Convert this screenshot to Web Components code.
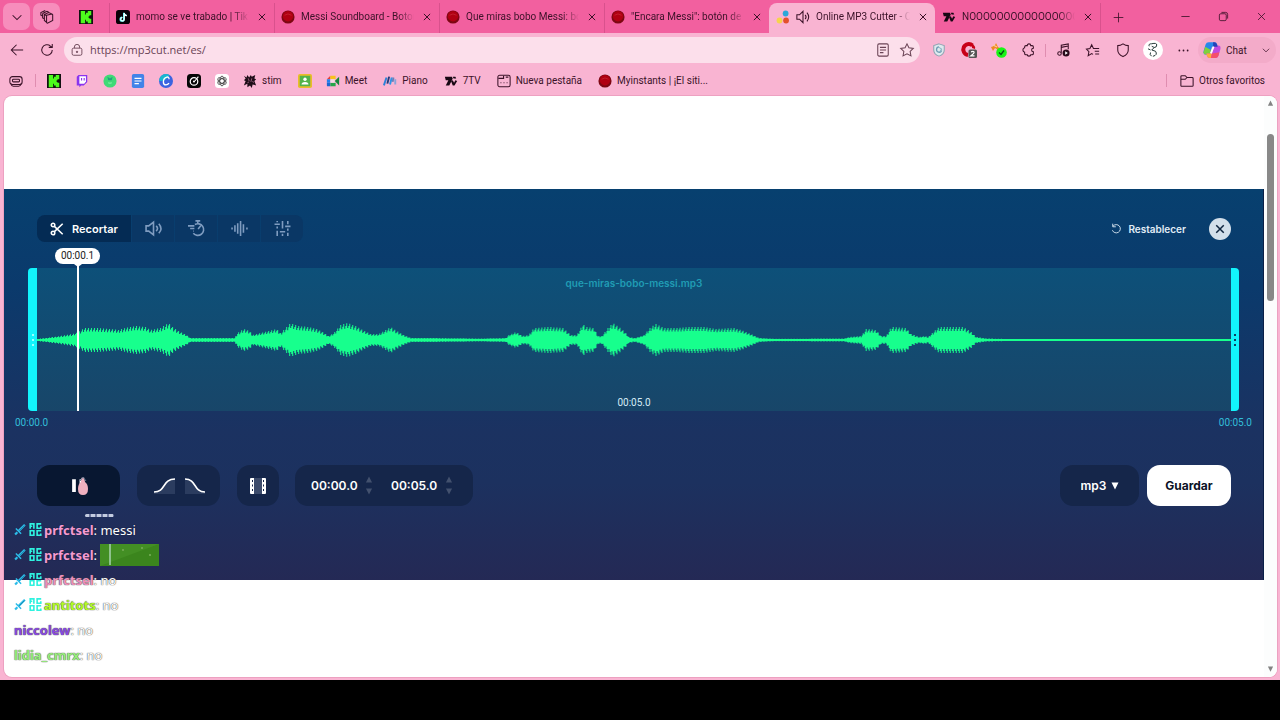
<!DOCTYPE html>
<html lang="es">
<head>
<meta charset="utf-8">
<title>Online MP3 Cutter</title>
<style>
  html { height: 100%; }
  body { margin: 0; min-height: 100%; display: flex; flex-direction: column; background: #000; font-family: Roboto, "Open Sans", sans-serif; font-size: 10px; color: #3b1228; }
</style>
</head>
<body>
<browser-window></browser-window>
<script>
const ICONS = {
  chevron: '<path d="M3 6l5 5 5-5"/>',
  workspaces: '<path d="M7.500 6l6-1.500q1 0 1 1V12l-6 3q-1 0-1-1zM7.500 6.500L5 5v7l2.500 2M5 5l5-2 3.500 1.500M5 10l-2-1V4.500Q3 4 4 3.500l4-2 2 1M3 7L1 6V3l5-2.500"/>',
  kick: '<path fill="#111" stroke="none" d="M0 0h16v16H0z"/><path fill="#4dfb1c" stroke="none" d="M2 1h5v4h1V3h2V1h4v5h-2v1h-1v2h1v1h2v5h-4v-2H8v-2H7v4H2z"/>',
  tiktok: '<rect width="16" height="16" rx="3" fill="#080008" stroke="none"/><path d="M9 3v7.500a2 2 0 1 1-2-2M9 3c0 2 1 3 3 3" stroke="#6ff" stroke-width="2"/><path d="M9.500 3.500v7a2 2 0 1 1-2-2M9.500 3.500c0 2 1 3 3 3" stroke="#fff"/>',
  redball: '<circle cx="8" cy="8" r="7.500" fill="#7d0713" stroke="none"/><circle cx="8" cy="7" r="6" fill="#b00012" stroke="none"/><path d="M4 6q4-3 8 0" stroke="#c72a35" stroke-width=".8"/>',
  close: '<path d="M3 3l10 10M13 3L3 13"/>',
  dots3: '<g stroke="none"><circle cx="11" cy="4" r="3.300" fill="#2ba8d9"/><circle cx="4" cy="12" r="3.300" fill="#f6d44c"/><circle cx="11.500" cy="12" r="3.300" fill="#e4502c"/></g>',
  speaker: '<path d="M1 5.500h3l4-4v13l-4-4H1zM10.500 5.500q2 2.500 0 5M12.500 3q4 5 0 10"/>',
  seventv: '<g fill="#180713" stroke="none"><path d="M1 3h8l1 2-4 8H2l3-6H2z"/><path d="M8 8l2-1 1.500 3L13 7l2 1-3 5h-2zM10 3h3l1 2h-3z"/></g>',
  plus: '<path d="M8 1v14M1 8h14"/>',
  minus: '<path d="M2 8h12"/>',
  restore: '<rect x="2" y="4" width="10" height="10" rx="2"/><path d="M5 2h6q3 0 3 3v6"/>',
  back: '<path d="M15 8H1.500M7.500 2l-6 6 6 6"/>',
  reload: '<path d="M14 8a6 6 0 1 1-2-4.500L14 5M14 1v4h-4"/>',
  lock: '<rect x="1.500" y="5.500" width="13" height="9.500" rx="2"/><path d="M4.500 5.500V4a3.500 3.500 0 0 1 7 0v1.500"/><circle cx="8" cy="10.500" r=".9" fill="currentColor"/>',
  reader: '<rect x="2" y="1" width="12" height="14" rx="1.500"/><path d="M4.500 5h7M4.500 8h7M4.500 11h4"/>',
  star: '<path d="M8 1l2.200 4.500 5 .7-3.600 3.500.9 5L8 12.400 3.500 14.700l.9-5L.8 6.200l5-.7z"/>',
  shieldgray: '<path d="M8 1l6 2v5q0 5-6 7-6-2-6-7V3z" fill="#dfe9ee" stroke="#8fa5b3"/><path d="M8 4.500a3 3 0 1 0 3 4" stroke="#6f9cb5" stroke-width="1.500"/><path d="M8 5l3 2-2 3" stroke="#8fb4c6"/>',
  adblock: '<path d="M11.500 3.500A5.500 5.500 0 1 0 7 13" stroke="#c80018" stroke-width="4"/><path d="M11 2q4 2 3 5l-3-1z" fill="#c80018" stroke="none"/><rect x="7.500" y="7.500" width="8.500" height="8.500" rx="1.500" fill="#555" stroke="none"/><path d="M10 9.800q3.500-1 3 .8 0 1-3 3.200h3.500" stroke="#fff"/>',
  carrot: '<path d="M0 5q4-1 5-4l2 4 3 2-3 1-3-2-2 3z" fill="#ef8b22" stroke="none"/><path d="M2 3l4 2" stroke="#f7cf9e"/><circle cx="10.500" cy="10.500" r="5.300" fill="#19f516" stroke="none"/><path d="M8 10.500l2 2 3-4" stroke="#064d13" stroke-width="1.300"/>',
  puzzle: '<path d="M4.500 3H6q0-2 2-2t2 2h1.500Q13 3 13 4.500V6q-2 0-2 2t2 2v2q0 1.500-1.500 1.500H10q0 1.500-2 1.500t-2-1.500H4.500Q3 13.500 3 12v-1.500Q1 10 1 8t2-2.500v-1Q3 3 4.500 3z"/>',
  music: '<path d="M6 11V2.500L14 1v6M6 5l8-1.500"/><circle cx="4" cy="12" r="2"/><circle cx="11.500" cy="11.500" r="4" fill="#2a0c1c" stroke="none"/><path d="M10.500 9.500l3 2-3 2z" fill="#fff" stroke="none"/>',
  favs: '<path d="M8 13l-1.500-1L2.500 14.500l.8-4.500L.5 7l4-.7L6.500 2l2 4.300H15M10 9.500h5M10.500 12.500H15"/>',
  shield: '<path d="M8 1q3 2 6 2v5q0 5-6 7.500Q2 13 2 8V3q3 0 6-2z"/>',
  profile: '<circle cx="8" cy="8" r="8" fill="#fff" stroke="none"/><path d="M5 5q-1-2 2-2 4-1 4 1 0 2-2 2L7 8l3 1q2 3-2 4M7 5l2 1M6 10q-1 2 1 3M4 7l2 1" stroke="#263b3a" stroke-width=".8"/>',
  more: '<g fill="currentColor" stroke="none"><circle cx="2" cy="8" r="1.300"/><circle cx="8" cy="8" r="1.300"/><circle cx="14" cy="8" r="1.300"/></g>',
  copilot: '<g stroke="none"><path d="M5 1h5q2 0 2.500 2l.5 2H8L6 12H2.500Q0 12 .5 9l1.800-6Q3 1 5 1z" fill="#2587ea"/><path d="M2 5l-1.500 5q0 2 2 2H6l1-4z" fill="#7ed13d"/><path d="M11 15H6q-2 0-2.500-2L3 11h5l2-7h3.500Q16 4 15.500 7l-1.800 6q-.7 2-2.700 2z" fill="#c04be0"/><path d="M3 11h5l-1 4H6q-2 0-2.500-2z" fill="#ffae35"/><path d="M8 11l-1 4h4q2 0 2.700-2l.8-3z" fill="#f5506a"/><path d="M9 1h1q2 0 2.500 2l.5 2H9z" fill="#2443b8"/><path d="M9.500 5L7 11" stroke="#fff" stroke-width="1.500"/></g>',
  drawer: '<rect x="1" y="3" width="14" height="9" rx="3"/><rect x="4" y="6" width="8" height="3" rx="1"/><path d="M2 11q1 3 3 3h6q2 0 3-3"/>',
  twitch: '<path d="M2 3l2-2h10v8l-4 4H7l-2 2v-2H2z" fill="#8a35ee" stroke="none"/><path d="M5 2.500h7.500v6L10.500 11H5z" fill="#fff" stroke="none"/><path d="M7.500 4.500v3M10.500 4.500v3" stroke="#8a35ee" stroke-width="1.300"/>',
  greenball: '<circle cx="8" cy="8" r="7.500" fill="#3fda76" stroke="none"/><path d="M5 3l3 2 3-2-1 4H6z" fill="#249d80" stroke="none"/><path d="M6 10q2 1 4 0" stroke="#8df0ae"/>',
  docs: '<rect x="1" y="0" width="14" height="16" rx="2" fill="#4283e8" stroke="none"/><path d="M4 5h8M4 8h8M4 11h5" stroke="#fff" stroke-width="1.300"/>',
  canva: '<circle cx="8" cy="8" r="8" fill="#3b63e0" stroke="none"/><path d="M8 0a8 8 0 0 0-8 8q8 1 12-6.500Q10 0 8 0z" fill="#19b8cf" stroke="none"/><path d="M11.500 6q0-3-2.500-2.500Q5 4.500 5 9q0 3.500 3 3.500 2 0 3.500-2" stroke="#fff" stroke-width="1.500"/>',
  blackdisc: '<rect width="16" height="16" rx="4" fill="#060606" stroke="none"/><circle cx="8" cy="8.500" r="4.300" stroke="#fff" stroke-width="1.400"/><path d="M9 8l4-5" stroke="#fff"/><circle cx="8" cy="8.500" r="1.200" fill="#fff" stroke="none"/>',
  gpt: '<rect width="16" height="16" rx="4" fill="#fff" stroke="none"/><g stroke="#333" stroke-width=".9"><ellipse cx="8" cy="8" rx="2.500" ry="5.500"/><ellipse cx="8" cy="8" rx="2.500" ry="5.500" transform="rotate(60 8 8)"/><ellipse cx="8" cy="8" rx="2.500" ry="5.500" transform="rotate(120 8 8)"/></g>',
  stim: '<path d="M1 2l3 2 1-3 2 3 2-3 1 2 4-2-1 4 2 1-2 2 2 5-4-1-1 4-2-3-3 2v-4l-4 2 2-5-2-1 2-2z" fill="#1e0d18" stroke="none"/><path d="M6 5l1 3M10 5l-1 4M5 10l2-1M11 8l1 2" stroke="#d78cae" stroke-width=".7"/>',
  classroom: '<rect width="16" height="16" rx="2" fill="#e9bd2a" stroke="none"/><rect x="2" y="2" width="12" height="12" fill="#54b34b" stroke="none"/><circle cx="8" cy="6" r="1.900" fill="#fff" stroke="none"/><path d="M4 12q0-3 4-3t4 3z" fill="#fff" stroke="none"/>',
  meet: '<g stroke="none"><path d="M1 6l4-4v4z" fill="#e94235"/><path d="M1 6h4v4H1z" fill="#2480ee"/><path d="M1 10h4v4H2q-1 0-1-1z" fill="#1967d2"/><path d="M5 2h6v4H5z" fill="#f7c21c"/><path d="M5 10h6v4H5z" fill="#26a64a"/><path d="M5 6h5v4H5z" fill="#f6dbe6"/><path d="M10 8l5-5v10z" fill="#14883b"/></g>',
  piano: '<g stroke-width="2.200"><path d="M1 13l3-9" stroke="#2b82d9"/><path d="M5 11l2-8" stroke="#253b78"/><path d="M8 12l2-8" stroke="#2b94e9"/><path d="M11 9l1-5" stroke="#6e7eb9"/><path d="M14 12V6" stroke="#89a4da"/></g>',
  newtab: '<rect x="1" y="1.500" width="14" height="13" rx="2"/><path d="M1.500 5h6V2M10 3.500h3M4 10h1M7.500 10h1M11 10h1" stroke-width="1.300"/>',
  folder: '<path d="M1 3q0-1 1-1h4l2 2h6q1 0 1 1v8q0 1-1 1H2q-1 0-1-1zM1 6h5l2-2"/>',
  scissors: '<circle cx="3.500" cy="3.500" r="2"/><circle cx="3.500" cy="12.500" r="2"/><path d="M5 5l9.500 9M5 11l9.500-9"/>',
  volume: '<path d="M1 5.500h2.500L8 2v12L3.500 10.500H1zM10.500 5.500q2.500 2.500 0 5M13 3.500q4 4.500 0 9"/>',
  tempo: '<path d="M6.500 4.200a5.500 5.500 0 1 1-1.500 8.300M7 .8h4.500M9.200 1v2.500M9.500 8.500l2.500-3M0 5.500h6M2 8h4M5 10.500h.5"/>',
  pitch: '<path d="M1 7v2M3.700 5v6M6.300 3v10M9 1v14M11.700 4v8M15 7v2"/>',
  equal: '<path d="M3 1v1M3 6v2M3 10v5M8 1v7M8 13v2M13 1v3M13 8v2M13 12v3M.5 4h5M5.500 11h5M10.500 6h5"/>',
  undo: '<path d="M3 4.500a6 6 0 1 1-1 6M2.500 1v4.500H7" stroke-width="1.300"/>',
  pause: '<path d="M2 2h3.500v12H2zM9 2h3.500v12H9z" fill="#fff" stroke="none"/>',
  up: '<path d="M8 1l7 14H1z" fill="currentColor" stroke="none"/>',
  down: '<path d="M1 1h14L8 15z" fill="currentColor" stroke="none"/>',
  sword: '<path d="M14.500 1L6 9.500M4.500 11L1.500 14" stroke="#2cbce9" stroke-width="3"/><path d="M2.500 6l7 7" stroke="#2cbce9" stroke-width="2"/><path d="M14 2L7 9" stroke="#12698f" stroke-width=".8"/>',
  badge: '<path d="M1.500 7V1h4.500v6M1.500 4H4M15 1h-5v5.500h4.500V4M1.500 9.500H6V15H1.500zM15 9.500h-5V15h4.500v-2" stroke="#2ff2df" stroke-width="2"/>'
};

class BaseElement extends HTMLElement {
  connectedCallback() {
    if (this.shadowRoot) return;
    const t = document.createElement('template');
    t.innerHTML = this.render();
    this.attachShadow({ mode: 'open' }).append(t.content.cloneNode(true));
  }
}

const RESET = `*,:host{box-sizing:border-box}
 button,input,select{appearance:none;font:inherit;color:inherit;background:none;border:0;padding:0;margin:0;min-width:0}
 button{display:flex;align-items:center;justify-content:center;flex:none}`;

customElements.define('ui-icon', class extends BaseElement {
  render() {
    return `<style>:host{display:inline-flex;flex:none;width:14px;height:14px}svg{width:100%;height:100%;overflow:visible}path,circle,rect{vector-effect:none}</style>
    <svg viewBox="0 0 16 16" fill="none" stroke="currentColor" stroke-width="${this.getAttribute('weight') || 1.2}" aria-hidden="true">${ICONS[this.getAttribute('name')]}</svg>`;
  }
});

customElements.define('browser-tab', class extends BaseElement {
  render() {
    const audio = this.hasAttribute('audio') ? '<ui-icon name="speaker"></ui-icon>' : '';
    return `<style>${RESET}
      :host{display:flex;align-items:center;flex:0 1 165px;min-width:0;height:30px;padding:0 5px 2px 6px;gap:6px;border-left:1px solid #d9518d}
      :host([plain]){border-color:transparent}
      :host([active]){background:#f9b4d2;border-color:transparent;border-radius:8px 8px 0 0;flex-basis:166px}
      .t{flex:1;min-width:0;overflow:hidden;white-space:nowrap;font-size:10px;line-height:16px;-webkit-mask-image:linear-gradient(90deg,#000 calc(100% - 16px),transparent)}
      button{width:14px;height:14px}button ui-icon{width:10px;height:10px}
    </style>
    <ui-icon name="${this.getAttribute('icon')}"></ui-icon>${audio}<span class="t"><slot></slot></span>
    <button aria-label="Cerrar pestaña"><ui-icon name="close" weight="1.600"></ui-icon></button>`;
  }
});

customElements.define('tab-strip', class extends BaseElement {
  render() {
    return `<style>${RESET}
      :host{display:flex;align-items:flex-end;height:33px;background:#f2609f;padding:0 9px 0 3px}
      .sq{width:27px;height:27px;border-radius:7px;background:#f78dbc;margin:0 3px 3px 0}
      .sq ui-icon{width:14px;height:14px}
      .pin{width:46px;height:30px;padding-bottom:2px}
      .plus{width:36px;height:30px;padding-bottom:2px;border-left:1px solid #d9518d}
      .win{display:flex;margin-left:auto;height:33px}
      .win button{width:38px}.win button:last-child{width:20px;margin-left:9px}
      .win ui-icon,.plus ui-icon{width:11px;height:11px}
    </style>
    <button class="sq" aria-label="Buscar pestañas"><ui-icon name="chevron"></ui-icon></button>
    <button class="sq" aria-label="Áreas de trabajo"><ui-icon name="workspaces"></ui-icon></button>
    <button class="pin" aria-label="Kick"><ui-icon name="kick"></ui-icon></button>
    <browser-tab icon="tiktok">momo se ve trabado | TikTok</browser-tab>
    <browser-tab icon="redball">Messi Soundboard - Botones</browser-tab>
    <browser-tab icon="redball">Que miras bobo Messi: botón</browser-tab>
    <browser-tab icon="redball">"Encara Messi": botón de efecto</browser-tab>
    <browser-tab icon="dots3" audio active>Online MP3 Cutter - Cortar</browser-tab>
    <browser-tab icon="seventv" plain>NOOOOOOOOOOOOOOOOOO</browser-tab>
    <button class="plus" aria-label="Nueva pestaña"><ui-icon name="plus"></ui-icon></button>
    <div class="win"><button aria-label="Minimizar"><ui-icon name="minus"></ui-icon></button><button aria-label="Restaurar"><ui-icon name="restore"></ui-icon></button><button aria-label="Cerrar"><ui-icon name="close"></ui-icon></button></div>`;
  }
});

customElements.define('tool-bar', class extends BaseElement {
  render() {
    const b = (n, l, c = '') => `<button class="${c}" aria-label="${l}"><ui-icon name="${n}"></ui-icon></button>`;
    return `<style>${RESET}
      :host{display:flex;align-items:center;height:34px;padding:0 4px 0 2px}
      button{width:30px;height:26px}
      .addr{flex:1;display:flex;align-items:center;height:26px;margin:0 4px 0 2px;border-radius:13px;background:#fcdfeb;padding:0 1px 0 7px;color:#6a4355}
      .addr ui-icon{width:12px;height:12px}.addr button{width:24px}
      .addr button ui-icon{width:14px;height:14px}
      .url{flex:1;margin-left:7px;font:11px/16px "Open Sans",sans-serif;display:grid}
      .url input{width:100%;outline:0}
      .sep{width:1px;height:13px;background:#df8db0;margin:0 2px 0 1px}
      .big ui-icon{width:20px;height:20px}.mid ui-icon{width:16px;height:16px}
      .more ui-icon{width:11px;height:11px}
      .chat{width:78px;height:26px;border-radius:13px;background:#f3abc9;gap:5px;font-size:10px;padding:0 5px;justify-content:flex-start}
      .chat ui-icon:first-child{width:18px;height:18px}.chat ui-icon:last-child{width:10px;height:10px;margin-left:auto}
    </style>
    ${b('back', 'Atrás')}${b('reload', 'Actualizar')}
    <div class="addr"><ui-icon name="lock"></ui-icon><label class="url"><input aria-label="Dirección" value="https://mp3cut.net/es/"></label>${b('reader', 'Lector')}${b('star', 'Favorito')}</div>
    ${b('shieldgray', 'Protección')}${b('adblock', 'Bloqueador', 'mid')}${b('carrot', 'Cupones', 'mid')}${b('puzzle', 'Extensiones')}
    <span class="sep"></span>
    ${b('music', 'Multimedia')}${b('favs', 'Favoritos')}${b('shield', 'Seguridad')}${b('profile', 'Perfil', 'big')}${b('more', 'Más', 'more')}
    <button class="chat"><ui-icon name="copilot"></ui-icon>Chat<ui-icon name="chevron"></ui-icon></button>`;
  }
});

customElements.define('bookmark-item', class extends BaseElement {
  render() {
    const text = this.textContent.trim() ? '<span><slot></slot></span>' : '';
    return `<style>${RESET}
      :host{display:block;flex:none}
      a{display:flex;align-items:center;gap:5px;height:26px;padding:0 7px;color:inherit;text-decoration:none;font-size:10px;line-height:14px;white-space:nowrap}
      span{padding-right:2px}
    </style><a href="#" aria-label="${this.textContent.trim() || this.getAttribute('icon')}"><ui-icon name="${this.getAttribute('icon')}"></ui-icon>${text}</a>`;
  }
});

customElements.define('bookmark-bar', class extends BaseElement {
  render() {
    return `<style>${RESET}
      :host{display:flex;align-items:center;height:29px;padding:0 6px 2px 2px}
      .sep{width:1px;height:13px;background:#df8db0;margin:0 4px 0 5px}
      .end{margin-left:auto;margin-right:6px}
    </style>
    <bookmark-item icon="drawer"></bookmark-item><span class="sep"></span>
    ${['kick', 'twitch', 'greenball', 'docs', 'canva', 'blackdisc', 'gpt'].map(i => `<bookmark-item icon="${i}"></bookmark-item>`).join('')}
    <bookmark-item icon="stim">stim</bookmark-item><bookmark-item icon="classroom"></bookmark-item>
    <bookmark-item icon="meet">Meet</bookmark-item><bookmark-item icon="piano">Piano</bookmark-item>
    <bookmark-item icon="seventv">7TV</bookmark-item><bookmark-item icon="newtab">Nueva pestaña</bookmark-item>
    <bookmark-item icon="redball">Myinstants | ¡El siti...</bookmark-item>
    <span class="sep end"></span><bookmark-item icon="folder">Otros favoritos</bookmark-item>`;
  }
});

/* Loudness envelope of the clip: position on a 0-1193 scale, half height of the wave. */
const ENVELOPE = [0,1, 8,2, 23,4, 35,6, 41,8, 47,12, 58,12, 73,11, 81,10, 88,12, 98,14, 108,13, 113,10, 123,12, 131,17, 136,12, 143,8, 149,5, 153,2, 163,2, 178,2, 197,2, 200,7, 206,11, 212,9, 215,5, 223,7, 231,9, 239,11, 243,7, 248,12, 253,17, 260,14, 271,13, 279,11, 285,8, 291,4, 296,7, 303,15, 310,17, 318,14, 325,10, 333,6, 341,6, 348,10, 353,13, 359,9, 366,5, 373,2, 393,2, 443,1.500, 468,2, 471,5, 478,8, 485,4, 491,5, 496,12, 511,13, 525,12, 533,5, 539,5, 545,16, 548,13, 556,12, 560,4, 564,4, 570,12, 575,17, 581,13, 587,8, 591,3, 597,2, 606,5, 613,13, 618,16, 626,12, 638,12, 653,13, 666,13, 678,11, 696,12, 703,10, 713,6, 721,2, 738,1.200, 806,1.500, 811,3, 823,4, 828,11, 838,10, 843,4, 848,4, 853,13, 868,12, 873,6, 881,3, 886,4, 890,3, 896,9, 901,13, 913,13, 925,13, 933,8, 938,3, 948,1.500, 973,1, 1193,1];

function wavePath() {
  const top = [], bottom = [];
  for (let x = 0, i = 0; x < 1193; x++) {
    while (i < ENVELOPE.length - 4 && ENVELOPE[i + 2] < x) i += 2;
    const f = (x - ENVELOPE[i]) / (ENVELOPE[i + 2] - ENVELOPE[i]);
    const e = ENVELOPE[i + 1] + f * (ENVELOPE[i + 3] - ENVELOPE[i + 1]);
    const a = Math.max(1, e * [1, .7, .85][x % 3]);
    top.push(`${x},${(20 - a).toFixed(1)}L${x + 1},${(20 - a).toFixed(1)}`);
    bottom.unshift(`${x + 1},${(20 + a).toFixed(1)}L${x},${(20 + a).toFixed(1)}`);
  }
  return `M${top.join('L')}L${bottom.join('L')}z`;
}

customElements.define('wave-track', class extends BaseElement {
  render() {
    return `<style>${RESET}
      :host{display:block;position:relative;margin:26px 25px 0 24px}
      .row{display:grid;grid-template-columns:9px 1fr 8px;height:143px}
      .h{background:#12f4fc;display:flex;flex-direction:column;gap:3px;align-items:center;justify-content:center;border-radius:4px 0 0 4px}
      .h.r{border-radius:0 4px 4px 0;color:#0b3b60}.h i{width:2px;height:2px;background:currentColor}.h.l{color:#9ff}
      .mid{display:grid;grid-template-rows:1fr 40px 1fr;justify-items:center;background:linear-gradient(#0d5079,#184669)}
      .name{font:600 10px/16px Inter,sans-serif;color:#209cb4;padding-top:7px}
      svg{width:100%;height:40px;display:block}
      .len{font-size:10px;line-height:16px;color:#d4ecf6;align-self:end}
      :host{font-family:Roboto,sans-serif}
      .times{display:flex;justify-content:space-between;margin:0 -13px;font-size:10px;line-height:24px;color:#33bfd9}
      .play{position:absolute;left:27px;top:-20px;bottom:24px;width:45px;display:flex;flex-direction:column;align-items:center}
      .tip{align-self:stretch;height:16px;border-radius:8px;background:#fff;color:#222;font-size:10px;line-height:15px;text-align:center}
      .line{width:2px;flex:1;background:#fff}
      .tri{border:4px solid transparent;border-top:3px solid #fff;border-bottom:0;margin-bottom:-3px}
    </style>
    <div class="row"><div class="h l"><i></i><i></i><i></i></div>
      <div class="mid"><span class="name">que-miras-bobo-messi.mp3</span>
        <svg viewBox="0 0 1193 40" preserveAspectRatio="none" aria-hidden="true"><path fill="#17ff8d" d="${wavePath()}"/></svg>
        <span class="len">00:05.0</span></div>
      <div class="h r"><i></i><i></i><i></i></div></div>
    <div class="times"><span>00:00.0</span><span>00:05.0</span></div>
    <div class="play"><div class="tip">00:00.1</div><i class="tri"></i><i class="line"></i></div>`;
  }
});

customElements.define('time-field', class extends BaseElement {
  render() {
    return `<style>${RESET}:host{display:flex;align-items:center;gap:6px}
      input{width:48px;font:600 12px/16px Inter,sans-serif;color:#fff;outline:0}
      div{display:flex;flex-direction:column;gap:5px;color:#43516e}button,ui-icon{width:8px;height:7px}</style>
      <input aria-label="${this.getAttribute('label')}" value="${this.getAttribute('value')}">
      <div><button aria-label="Más"><ui-icon name="up"></ui-icon></button><button aria-label="Menos"><ui-icon name="down"></ui-icon></button></div>`;
  }
});

customElements.define('mp3-editor', class extends BaseElement {
  render() {
    return `<style>${RESET}
      :host{display:block;margin-top:93px;padding:26px 0 74px;background:linear-gradient(#07406f,#0b3a6c 25%,#1b3261 62%,#1c315f 75%,#242955);font-family:Inter,Roboto,sans-serif;color:#fff;box-shadow:inset -1px 0 #0a1f47}
      header,footer{display:flex;align-items:center;padding:0 33px}
      .tools{display:flex;height:27px;border-radius:8px;overflow:hidden;gap:1px}
      .tools button{width:42px;background:#0a3765;color:#7f9cc0}
      .tools .on{width:94px;background:#042b54;color:#fff;gap:8px;font-weight:600;font-size:11px}
      .tools ui-icon{width:17px;height:17px}.tools .on ui-icon{width:14px;height:14px}
      .reset{margin-left:auto;gap:6px;font-weight:600;font-size:10px;color:#e0ecf6}.reset ui-icon{width:11px;height:11px}
      .x{width:22px;height:22px;border-radius:50%;background:#d3dfea;color:#10253f;margin-left:23px}.x ui-icon{width:12px;height:12px}
      footer{margin-top:30px;gap:17px}
      footer>*{height:41px;border-radius:13px}
      .dark{background:#15264a}
      .pause{width:83px;background:#081731;position:relative}.pause ui-icon{width:17px;height:17px}
      .hand{position:absolute;left:38px;top:11px;width:16px;height:21px}
      .fade{width:83px}.fade svg{width:54px;height:20px}
      .film{width:42px}.film svg{width:18px;height:18px}
      .times{display:flex;align-items:center;gap:18px;padding:0 20px 0 16px;margin-left:-1px}
      .fmt{margin-left:auto;width:79px;display:flex;align-items:center;justify-content:center;gap:4px;font-weight:600;font-size:12px}
      .fmt ui-icon{width:8px;height:8px}
      .save{width:84px;background:#fff;color:#0c1226;font-weight:700;font-size:12px;margin-left:-9px}
    </style>
    <header>
      <div class="tools"><button class="on"><ui-icon name="scissors" weight="1.800"></ui-icon>Recortar</button>
        <button aria-label="Volumen"><ui-icon name="volume" weight="1.500"></ui-icon></button><button aria-label="Velocidad"><ui-icon name="tempo" weight="1.500"></ui-icon></button>
        <button aria-label="Tono"><ui-icon name="pitch" weight="1.500"></ui-icon></button><button aria-label="Ecualizador"><ui-icon name="equal" weight="1.500"></ui-icon></button></div>
      <button class="reset"><ui-icon name="undo"></ui-icon>Restablecer</button>
      <button class="x" aria-label="Cerrar"><ui-icon name="close" weight="2"></ui-icon></button>
    </header>
    <wave-track></wave-track>
    <footer>
      <button class="pause" aria-label="Pausa"><ui-icon name="pause"></ui-icon>
        <svg class="hand" viewBox="0 0 16 21" aria-hidden="true"><path d="M6 2l3-1 1 5q3 2 3 7 0 6-5 6-5 0-5-6 0-5 3-7z" fill="#efb0bf"/><path d="M5 5l3-4 3 4" fill="none" stroke="#60758c"/></svg></button>
      <button class="dark fade" aria-label="Fundidos"><svg viewBox="0 0 54 20" fill="none" aria-hidden="true"><path d="M2 16C14 16 10 3 23 3v15H2zM33 3c12 0 8 13 20 13v2H33z" fill="#2b3c5f"/><path d="M2 16C14 16 10 3 23 3M33 3c12 0 8 13 20 13" stroke="#fff" stroke-width="1.600"/></svg></button>
      <button class="dark film" aria-label="Recorte"><svg viewBox="0 0 18 18" aria-hidden="true"><path d="M5 1h8v16H5z" fill="#3c4b6b"/><path d="M2 1h3v16H2q-1 0-1-1V2q0-1 1-1zM13 1h3q1 0 1 1v14q0 1-1 1h-3z" fill="#fff"/><path d="M3 4h1M3 8.500h1M3 13h1M14 4h1M14 8.500h1M14 13h1" stroke="#15264a" stroke-width="2"/></svg></button>
      <div class="dark times"><time-field label="Inicio" value="00:00.0"></time-field><time-field label="Fin" value="00:05.0"></time-field></div>
      <label class="dark fmt"><select aria-label="Formato"><option>mp3</option></select><ui-icon name="down"></ui-icon></label>
      <button class="save">Guardar</button>
    </footer>`;
  }
});

customElements.define('chat-line', class extends BaseElement {
  render() {
    const badges = this.hasAttribute('badges') ? '<ui-icon name="sword"></ui-icon><ui-icon name="badge"></ui-icon>' : '';
    const pale = this.hasAttribute('pale');
    return `<style>:host{display:flex;align-items:center;height:25px;font:13px/18px "Noto Sans",sans-serif;color:#fff;white-space:pre;--edge:${pale ? '#555' : '#1a1f40'};text-shadow:0 0 1px var(--edge),0 0 1px var(--edge)}
      ui-icon{width:12px;height:12px;margin-right:3px}ui-icon+ui-icon{width:13px;height:13px;margin-right:2px}
      b{font-weight:700;color:${this.getAttribute('color')}}</style>${badges}<b>${this.getAttribute('user')}</b><span>: </span><slot></slot>`;
  }
});

customElements.define('chat-overlay', class extends BaseElement {
  render() {
    return `<style>:host{display:block;position:absolute;left:10px;top:421px;pointer-events:none}
      .field{width:59px;height:22px}</style>
      <chat-line badges user="prfctsel" color="#f59bd0">messi</chat-line>
      <chat-line badges user="prfctsel" color="#f59bd0"><svg class="field" viewBox="0 0 59 22" aria-hidden="true"><path fill="#438f24" d="M0 0h59v22H0z"/><path d="M0 22L59 0v22z" fill="#3b851d"/><path d="M10 0v21" stroke="#a9d3b0" stroke-width="1.500"/><path d="M22 6h2M41 4h2M49 11h2" stroke="#6aa54a" stroke-width="2"/></svg></chat-line>
      <chat-line badges pale user="prfctsel" color="#ee8fbd">no</chat-line>
      <chat-line badges pale user="antitots" color="#b4fa25">no</chat-line>
      <chat-line pale user="niccolew" color="#8a48e0">no</chat-line>
      <chat-line pale user="lidia_cmrx" color="#98ee7c">no</chat-line>`;
  }
});

customElements.define('page-view', class extends BaseElement {
  render() {
    return `<style>${RESET}
      :host{position:relative;flex:1;display:grid;grid-template-columns:1fr 13px;margin:0 3px 3px 4px;background:#fff;border-radius:8px;overflow:hidden;box-shadow:0 0 0 1px #eda1c1}
      .bar{display:flex;flex-direction:column;align-items:center;justify-content:space-between;padding:4px 0 5px;background:#fcfdfd;color:#838383}
      .bar ui-icon{width:7px;height:6px}.thumb{width:7px;height:167px;border-radius:4px;background:#888;margin:28px 0 auto}
      .typing{position:absolute;left:81px;top:418px;width:29px;height:3px;border-radius:2px;background:repeating-linear-gradient(90deg,#c3cce0 0 4px,#6d779e 4px 6px)}
    </style><main><mp3-editor></mp3-editor></main>
    <div class="bar"><ui-icon name="up"></ui-icon><div class="thumb"></div><ui-icon name="down"></ui-icon></div>
    <span class="typing"></span><chat-overlay></chat-overlay>`;
  }
});

customElements.define('browser-window', class extends BaseElement {
  render() {
    return `<style>:host{flex:1;display:flex;flex-direction:column;background:#f9b4d2;margin-bottom:40px}</style>
    <tab-strip></tab-strip><tool-bar></tool-bar><bookmark-bar></bookmark-bar><page-view></page-view>`;
  }
});
</script>
</body>
</html>
